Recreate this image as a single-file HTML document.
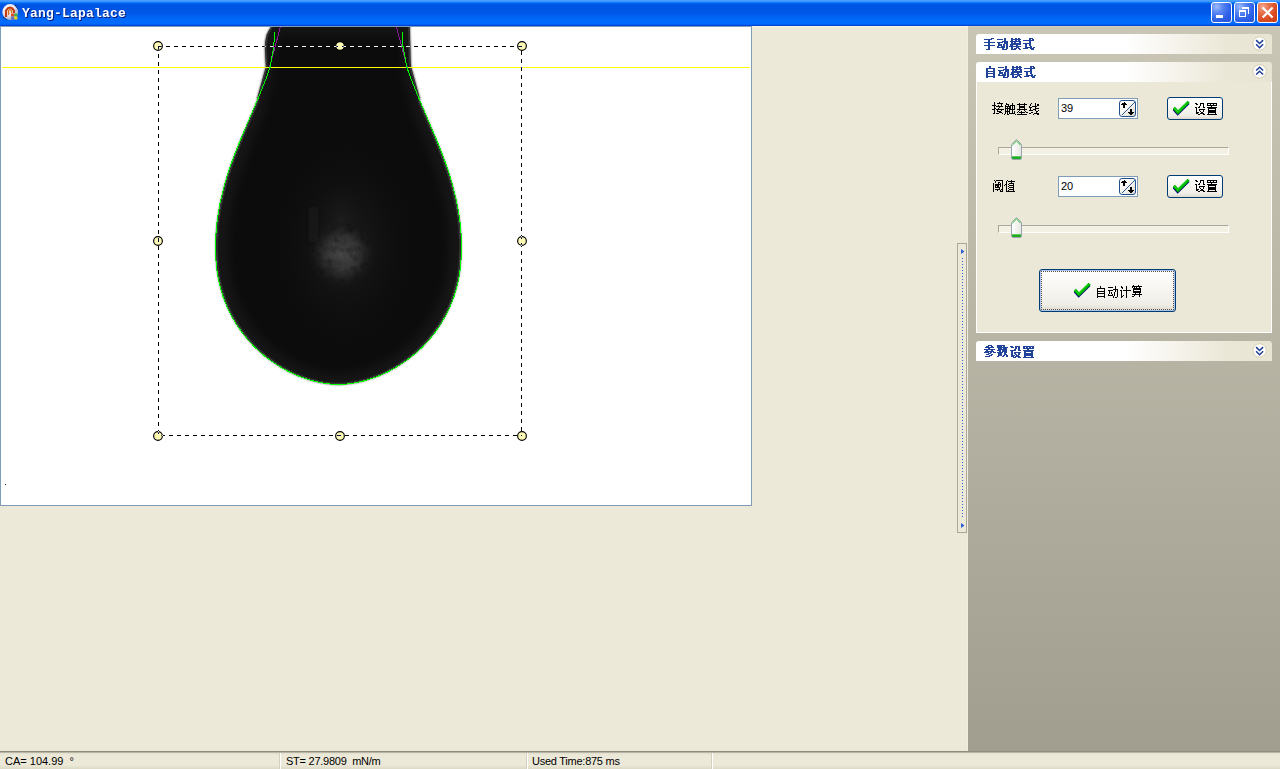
<!DOCTYPE html>
<html><head><meta charset="utf-8">
<style>
*{box-sizing:border-box;margin:0;padding:0}
html,body{width:1280px;height:769px;overflow:hidden;background:#ece9d8;font-family:"Liberation Sans",sans-serif;position:relative}
.abs{position:absolute}
#title{left:0;top:0;width:1280px;height:26px;
background:linear-gradient(180deg,#4a9cff 0px 1px,#3a93ff 1px 2px,#0b7eff 2px 3px,#0062ec 3px 4px,#0056e5 4px 5px,#0054e3 5px 6px,#0054e3 6px 7px,#0054e3 7px 8px,#0054e3 8px 9px,#0054e3 9px 10px,#0055e4 10px 11px,#0056e5 11px 12px,#0057e7 12px 13px,#0059e9 13px 14px,#005ceb 14px 15px,#005fee 15px 16px,#0062f1 16px 17px,#0065f4 17px 18px,#0067f7 18px 19px,#0069f9 19px 20px,#006afb 20px 21px,#006bfc 21px 22px,#006bfc 22px 23px,#0068fa 23px 24px,#005ff3 24px 25px,#0046d6 25px 26px)}
#ttext{left:22px;top:6px;font:bold 13px "Liberation Mono",monospace;color:#fff;text-shadow:1px 1px 0 #0a1a80;white-space:pre;line-height:15px;letter-spacing:0.2px}
.tb{top:2px;width:21px;height:21px;border:1px solid #fff;border-radius:3px}
.tbb{background:radial-gradient(circle at 25% 20%,#9dbcfb 0,#5684f1 30%,#2d60e8 65%,#2252d8 100%)}
.tbc{background:radial-gradient(circle at 25% 20%,#f3a88f 0,#e5714b 30%,#da4a1f 65%,#c73c15 100%)}
#view{left:0;top:26px;width:752px;height:480px;border:1px solid #7f9db9;background:#fff;overflow:hidden}
#rpanel{left:968px;top:26px;width:312px;height:725px;background:linear-gradient(180deg,#c9c6b6,#a19e8f)}
.hdr{left:976px;width:296px;height:20px;border-radius:3px 3px 0 0;background:linear-gradient(90deg,#fff 0%,#fff 50%,#ebe7d7 85%,#e9e5d4 100%)}
#body2{left:976px;top:82px;width:296px;height:251px;background:#ebe8d7;border:1px solid #fff;border-top:none}
.tbx{left:1058px;width:80px;height:21px;border:1px solid #7f9db9;background:#fff;font-size:11px;line-height:19px;padding-left:2px;color:#000}
.spin{left:1119px;width:17px;height:17px;border:1px solid #1f4f8f;border-radius:3px;background:linear-gradient(135deg,#fff 20%,#f1f0ea 60%,#dedbd0)}
.btn{border:1px solid #003c74;border-radius:3px;background:linear-gradient(180deg,#fff 0%,#f8f7f3 40%,#eeede6 85%,#dcd9cd 100%)}
.dflt{box-shadow:inset 0 0 0 1px #a9c3f0}
.focus{border:1px dotted #5a4a3a}
.track{left:998px;width:231px;height:8px;border-top:1px solid #aca899;border-left:1px solid #aca899;border-right:1px solid #fff;border-bottom:1px solid #fff;background:#f3f0e4}
#status{left:0;top:751px;width:1280px;height:18px;background:linear-gradient(180deg,#8e8c7e 0px,#8e8c7e 1px,#e3e0cf 2px,#ece9d8 4px,#ece9d8 14px,#dcd9c7 18px)}
.st{top:756px;font-size:11px;color:#000;white-space:pre;line-height:11px;letter-spacing:-0.25px}
.sep{top:753px;width:2px;height:16px;border-left:1px solid #d4d0bd;border-right:1px solid #fff}
</style></head><body>
<div id="title" class="abs"></div>
<svg class="abs" style="left:0;top:0" width="24" height="24">
<defs><radialGradient id="icg" cx="0.35" cy="0.3" r="0.7"><stop offset="0" stop-color="#ffffff"/><stop offset="0.6" stop-color="#e6e4ee"/><stop offset="1" stop-color="#a8b0c8"/></radialGradient></defs>
<circle cx="10.2" cy="12" r="7.9" fill="url(#icg)"/>
<path d="M6,17 V10.5 Q10,4.5 14,10.5 V13" fill="none" stroke="#c23a10" stroke-width="2.2"/>
<path d="M8.6,15 V10.6 Q10,8.6 11.5,10.6 V13" fill="none" stroke="#d8701c" stroke-width="1.4"/>
<rect x="11" y="13.5" width="3.2" height="3" fill="#e04a20"/><rect x="14.2" y="13.5" width="3.2" height="3" fill="#40b040"/>
<rect x="11" y="16.5" width="3.2" height="3" fill="#6a70c0"/><rect x="14.2" y="16.5" width="3.2" height="3" fill="#f0d020"/>
<path d="M15.3,5.2 L17.6,8.4 M3.2,17.3 L6.6,19.6" stroke="#000" stroke-width="0.9" stroke-dasharray="1 0.6"/>
</svg>
<div id="ttext" class="abs">Yang-Lapalace</div>
<div class="abs tb tbb" style="left:1211px"></div>
<div class="abs tb tbb" style="left:1234px"></div>
<div class="abs tb tbc" style="left:1257px"></div>
<svg class="abs" style="left:0;top:0" width="1280" height="26">
<rect x="1216" y="15" width="7" height="3" fill="#fff"/>
<path d="M1242,7 h7 v7 h-1 v-5 h-6z" fill="#fff"/>
<path d="M1239,10 h7 v7 h-7z M1240,12 v4 h5 v-4z" fill="#fff" fill-rule="evenodd"/>
<path d="M1262.6,7.6 L1272.6,17.6 M1272.6,7.6 L1262.6,17.6" stroke="#fff" stroke-width="2.1"/>
</svg>
<div id="view" class="abs"></div>
<svg class="abs" style="left:1px;top:27px" width="750" height="478" viewBox="1 27 750 478">
<defs>
<filter id="blur" x="-10%" y="-10%" width="120%" height="120%"><feGaussianBlur stdDeviation="1.1"/></filter>
<clipPath id="dclip"><path d="M270.5,20.0 271.0,27.0 268.5,31.0 266.6,35.0 265.2,42.0 265.0,50.0 265.5,60.0 265.9,67.0 265.3,69.0 264.7,71.0 264.2,73.0 263.6,75.0 263.1,77.0 262.5,79.0 262.0,81.0 261.4,83.0 260.9,85.0 260.3,87.0 259.8,89.0 259.2,91.0 258.7,93.0 258.1,95.0 257.6,97.0 257.0,99.0 257.4,101.0 256.5,103.0 255.7,105.0 254.8,107.0 254.0,109.0 253.1,111.0 252.3,113.0 251.4,115.0 250.5,117.0 249.7,119.0 248.8,121.0 248.0,123.0 247.1,125.0 246.3,127.0 245.4,129.0 244.6,131.0 243.7,133.0 242.9,135.0 242.0,137.0 241.2,139.0 240.4,141.0 239.6,143.0 238.8,145.0 238.0,147.0 237.2,149.0 236.4,151.0 235.6,153.0 234.8,155.0 234.1,157.0 233.3,159.0 232.6,161.0 231.9,163.0 231.2,165.0 230.5,167.0 229.8,169.0 229.1,171.0 228.5,173.0 227.8,175.0 227.2,177.0 226.6,179.0 226.0,181.0 225.4,183.0 224.9,185.0 224.3,187.0 223.8,189.0 223.3,191.0 222.8,193.0 222.3,195.0 221.8,197.0 221.4,199.0 220.9,201.0 220.5,203.0 220.1,205.0 219.7,207.0 219.4,209.0 219.0,211.0 218.7,213.0 218.4,215.0 218.1,217.0 217.8,219.0 217.5,221.0 217.3,223.0 217.1,225.0 216.9,227.0 216.7,229.0 216.5,231.0 216.4,233.0 216.3,235.0 216.2,237.0 216.1,239.0 216.0,241.0 216.0,243.0 216.0,245.0 216.0,247.0 216.0,249.0 216.1,253.6 216.2,257.2 216.4,260.7 216.7,264.3 217.0,267.9 217.5,271.4 218.0,274.9 218.6,278.4 219.3,281.9 220.2,285.4 221.1,288.8 222.1,292.2 223.1,295.6 224.3,299.0 225.6,302.3 226.9,305.6 228.4,308.8 229.9,312.0 231.5,315.2 233.2,318.3 235.0,321.3 236.8,324.4 238.8,327.3 240.8,330.2 242.9,333.1 245.1,335.8 247.3,338.6 249.6,341.2 252.0,343.8 254.4,346.4 256.9,348.8 259.5,351.2 262.1,353.5 264.8,355.8 267.6,358.0 270.3,360.1 273.2,362.1 276.1,364.0 279.0,365.9 281.9,367.7 284.9,369.3 287.9,371.0 291.0,372.5 294.1,373.9 297.1,375.3 300.2,376.5 303.4,377.7 306.5,378.8 309.6,379.8 312.7,380.7 315.8,381.5 318.9,382.2 322.0,382.8 325.0,383.3 328.0,383.7 330.9,384.1 333.8,384.3 336.5,384.5 338.9,384.5 340.5,384.5 343.2,384.3 346.1,384.1 349.0,383.7 352.0,383.3 355.0,382.8 358.1,382.2 361.2,381.5 364.3,380.7 367.4,379.8 370.5,378.8 373.6,377.7 376.8,376.5 379.9,375.3 382.9,373.9 386.0,372.5 389.1,371.0 392.1,369.3 395.1,367.7 398.0,365.9 400.9,364.0 403.8,362.1 406.7,360.1 409.4,358.0 412.2,355.8 414.9,353.5 417.5,351.2 420.1,348.8 422.6,346.4 425.0,343.8 427.4,341.2 429.7,338.6 431.9,335.8 434.1,333.1 436.2,330.2 438.2,327.3 440.2,324.4 442.0,321.3 443.8,318.3 445.5,315.2 447.1,312.0 448.6,308.8 450.1,305.6 451.4,302.3 452.7,299.0 453.9,295.6 454.9,292.2 455.9,288.8 456.8,285.4 457.7,281.9 458.4,278.4 459.0,274.9 459.5,271.4 460.0,267.9 460.3,264.3 460.6,260.7 460.8,257.2 460.9,253.6 461.0,249.0 461.0,247.0 461.0,245.0 461.0,243.0 461.0,241.0 460.9,239.0 460.8,237.0 460.7,235.0 460.6,233.0 460.5,231.0 460.3,229.0 460.1,227.0 459.9,225.0 459.7,223.0 459.5,221.0 459.2,219.0 458.9,217.0 458.6,215.0 458.3,213.0 458.0,211.0 457.6,209.0 457.3,207.0 456.9,205.0 456.5,203.0 456.1,201.0 455.6,199.0 455.2,197.0 454.7,195.0 454.2,193.0 453.7,191.0 453.2,189.0 452.7,187.0 452.1,185.0 451.6,183.0 451.0,181.0 450.4,179.0 449.8,177.0 449.2,175.0 448.5,173.0 447.9,171.0 447.2,169.0 446.5,167.0 445.8,165.0 445.1,163.0 444.4,161.0 443.7,159.0 442.9,157.0 442.2,155.0 441.4,153.0 440.6,151.0 439.8,149.0 439.0,147.0 438.2,145.0 437.4,143.0 436.6,141.0 435.8,139.0 435.0,137.0 434.1,135.0 433.3,133.0 432.4,131.0 431.6,129.0 430.7,127.0 429.9,125.0 429.0,123.0 428.2,121.0 427.3,119.0 426.5,117.0 425.6,115.0 424.7,113.0 423.9,111.0 423.0,109.0 422.2,107.0 421.3,105.0 420.5,103.0 419.6,101.0 420.0,99.0 419.4,97.0 418.9,95.0 418.3,93.0 417.8,91.0 417.2,89.0 416.7,87.0 416.1,85.0 415.6,83.0 415.0,81.0 414.5,79.0 413.9,77.0 413.4,75.0 412.8,73.0 412.3,71.0 411.7,69.0 411.1,67.0 410.6,60.0 410.3,46.0 410.0,35.0 409.8,27.0 409.8,20.0 Z"/></clipPath>
<filter id="blur3" x="-50%" y="-20%" width="200%" height="140%"><feGaussianBlur stdDeviation="1.6"/></filter>
<filter id="blur4" x="-20%" y="-20%" width="140%" height="140%"><feGaussianBlur stdDeviation="5"/></filter>
<filter id="blur2" x="-10%" y="-10%" width="120%" height="120%"><feGaussianBlur stdDeviation="0.7"/></filter>
<radialGradient id="spot" cx="342" cy="254" r="34" gradientUnits="userSpaceOnUse">
<stop offset="0" stop-color="#484848" stop-opacity="1"/><stop offset="0.5" stop-color="#383838" stop-opacity="0.85"/><stop offset="1" stop-color="#1a1a1a" stop-opacity="0"/></radialGradient>
<radialGradient id="glow" cx="0.5" cy="0.5" r="0.5">
<stop offset="0" stop-color="#1e1e1e" stop-opacity="1"/><stop offset="1" stop-color="#0e0e0e" stop-opacity="0"/></radialGradient>
<filter id="speck" x="0" y="0" width="100%" height="100%">
<feTurbulence type="fractalNoise" baseFrequency="0.15" numOctaves="2" seed="3" result="n"/>
<feColorMatrix in="n" type="matrix" values="0 0 0 0 0  0 0 0 0 0  0 0 0 0 0  0 0 0 -2.2 1.25" result="a"/>
<feComposite in="SourceGraphic" in2="a" operator="in"/>
</filter>
</defs>
<path d="M270.5,20.0 271.0,27.0 268.5,31.0 266.6,35.0 265.2,42.0 265.0,50.0 265.5,60.0 265.9,67.0 265.3,69.0 264.7,71.0 264.2,73.0 263.6,75.0 263.1,77.0 262.5,79.0 262.0,81.0 261.4,83.0 260.9,85.0 260.3,87.0 259.8,89.0 259.2,91.0 258.7,93.0 258.1,95.0 257.6,97.0 257.0,99.0 257.4,101.0 256.5,103.0 255.7,105.0 254.8,107.0 254.0,109.0 253.1,111.0 252.3,113.0 251.4,115.0 250.5,117.0 249.7,119.0 248.8,121.0 248.0,123.0 247.1,125.0 246.3,127.0 245.4,129.0 244.6,131.0 243.7,133.0 242.9,135.0 242.0,137.0 241.2,139.0 240.4,141.0 239.6,143.0 238.8,145.0 238.0,147.0 237.2,149.0 236.4,151.0 235.6,153.0 234.8,155.0 234.1,157.0 233.3,159.0 232.6,161.0 231.9,163.0 231.2,165.0 230.5,167.0 229.8,169.0 229.1,171.0 228.5,173.0 227.8,175.0 227.2,177.0 226.6,179.0 226.0,181.0 225.4,183.0 224.9,185.0 224.3,187.0 223.8,189.0 223.3,191.0 222.8,193.0 222.3,195.0 221.8,197.0 221.4,199.0 220.9,201.0 220.5,203.0 220.1,205.0 219.7,207.0 219.4,209.0 219.0,211.0 218.7,213.0 218.4,215.0 218.1,217.0 217.8,219.0 217.5,221.0 217.3,223.0 217.1,225.0 216.9,227.0 216.7,229.0 216.5,231.0 216.4,233.0 216.3,235.0 216.2,237.0 216.1,239.0 216.0,241.0 216.0,243.0 216.0,245.0 216.0,247.0 216.0,249.0 216.1,253.6 216.2,257.2 216.4,260.7 216.7,264.3 217.0,267.9 217.5,271.4 218.0,274.9 218.6,278.4 219.3,281.9 220.2,285.4 221.1,288.8 222.1,292.2 223.1,295.6 224.3,299.0 225.6,302.3 226.9,305.6 228.4,308.8 229.9,312.0 231.5,315.2 233.2,318.3 235.0,321.3 236.8,324.4 238.8,327.3 240.8,330.2 242.9,333.1 245.1,335.8 247.3,338.6 249.6,341.2 252.0,343.8 254.4,346.4 256.9,348.8 259.5,351.2 262.1,353.5 264.8,355.8 267.6,358.0 270.3,360.1 273.2,362.1 276.1,364.0 279.0,365.9 281.9,367.7 284.9,369.3 287.9,371.0 291.0,372.5 294.1,373.9 297.1,375.3 300.2,376.5 303.4,377.7 306.5,378.8 309.6,379.8 312.7,380.7 315.8,381.5 318.9,382.2 322.0,382.8 325.0,383.3 328.0,383.7 330.9,384.1 333.8,384.3 336.5,384.5 338.9,384.5 340.5,384.5 343.2,384.3 346.1,384.1 349.0,383.7 352.0,383.3 355.0,382.8 358.1,382.2 361.2,381.5 364.3,380.7 367.4,379.8 370.5,378.8 373.6,377.7 376.8,376.5 379.9,375.3 382.9,373.9 386.0,372.5 389.1,371.0 392.1,369.3 395.1,367.7 398.0,365.9 400.9,364.0 403.8,362.1 406.7,360.1 409.4,358.0 412.2,355.8 414.9,353.5 417.5,351.2 420.1,348.8 422.6,346.4 425.0,343.8 427.4,341.2 429.7,338.6 431.9,335.8 434.1,333.1 436.2,330.2 438.2,327.3 440.2,324.4 442.0,321.3 443.8,318.3 445.5,315.2 447.1,312.0 448.6,308.8 450.1,305.6 451.4,302.3 452.7,299.0 453.9,295.6 454.9,292.2 455.9,288.8 456.8,285.4 457.7,281.9 458.4,278.4 459.0,274.9 459.5,271.4 460.0,267.9 460.3,264.3 460.6,260.7 460.8,257.2 460.9,253.6 461.0,249.0 461.0,247.0 461.0,245.0 461.0,243.0 461.0,241.0 460.9,239.0 460.8,237.0 460.7,235.0 460.6,233.0 460.5,231.0 460.3,229.0 460.1,227.0 459.9,225.0 459.7,223.0 459.5,221.0 459.2,219.0 458.9,217.0 458.6,215.0 458.3,213.0 458.0,211.0 457.6,209.0 457.3,207.0 456.9,205.0 456.5,203.0 456.1,201.0 455.6,199.0 455.2,197.0 454.7,195.0 454.2,193.0 453.7,191.0 453.2,189.0 452.7,187.0 452.1,185.0 451.6,183.0 451.0,181.0 450.4,179.0 449.8,177.0 449.2,175.0 448.5,173.0 447.9,171.0 447.2,169.0 446.5,167.0 445.8,165.0 445.1,163.0 444.4,161.0 443.7,159.0 442.9,157.0 442.2,155.0 441.4,153.0 440.6,151.0 439.8,149.0 439.0,147.0 438.2,145.0 437.4,143.0 436.6,141.0 435.8,139.0 435.0,137.0 434.1,135.0 433.3,133.0 432.4,131.0 431.6,129.0 430.7,127.0 429.9,125.0 429.0,123.0 428.2,121.0 427.3,119.0 426.5,117.0 425.6,115.0 424.7,113.0 423.9,111.0 423.0,109.0 422.2,107.0 421.3,105.0 420.5,103.0 419.6,101.0 420.0,99.0 419.4,97.0 418.9,95.0 418.3,93.0 417.8,91.0 417.2,89.0 416.7,87.0 416.1,85.0 415.6,83.0 415.0,81.0 414.5,79.0 413.9,77.0 413.4,75.0 412.8,73.0 412.3,71.0 411.7,69.0 411.1,67.0 410.6,60.0 410.3,46.0 410.0,35.0 409.8,27.0 409.8,20.0 Z" fill="#171717" filter="url(#blur)"/>
<g clip-path="url(#dclip)"><g opacity="0.45"><path d="M277.3,35.0 277.8,41.6 275.5,45.3 273.8,49.0 272.5,55.5 272.4,62.9 272.8,72.2 273.2,78.8 272.6,80.6 272.1,82.5 271.6,84.3 271.1,86.2 270.6,88.1 270.1,89.9 269.6,91.8 269.1,93.6 268.7,95.5 268.1,97.4 267.7,99.2 267.1,101.1 266.7,102.9 266.1,104.8 265.7,106.7 265.1,108.5 265.5,110.4 264.7,112.2 264.0,114.1 263.2,116.0 262.4,117.8 261.6,119.7 260.9,121.5 260.1,123.4 259.3,125.3 258.6,127.1 257.8,129.0 257.1,130.8 256.2,132.7 255.5,134.6 254.7,136.4 254.0,138.3 253.2,140.1 252.5,142.0 251.6,143.9 250.9,145.7 250.2,147.6 249.5,149.4 248.8,151.3 248.1,153.2 247.3,155.0 246.6,156.9 245.9,158.7 245.2,160.6 244.5,162.5 243.8,164.3 243.2,166.2 242.6,168.0 241.9,169.9 241.3,171.8 240.7,173.6 240.0,175.5 239.5,177.3 238.9,179.2 238.3,181.1 237.8,182.9 237.2,184.8 236.7,186.6 236.3,188.5 235.7,190.4 235.3,192.2 234.8,194.1 234.4,195.9 233.9,197.8 233.5,199.7 233.1,201.5 232.7,203.4 232.3,205.2 231.9,207.1 231.6,209.0 231.3,210.8 230.9,212.7 230.7,214.5 230.4,216.4 230.1,218.3 229.9,220.1 229.6,222.0 229.4,223.8 229.2,225.7 229.1,227.6 228.9,229.4 228.7,231.3 228.6,233.1 228.5,235.0 228.4,236.9 228.3,238.7 228.2,240.6 228.2,242.4 228.2,244.3 228.2,246.2 228.2,248.0 228.3,252.3 228.4,255.6 228.6,258.9 228.9,262.2 229.1,265.6 229.6,268.9 230.1,272.1 230.6,275.4 231.2,278.6 232.0,281.9 232.8,285.0 233.7,288.2 234.6,291.4 235.7,294.5 236.9,297.6 238.1,300.7 239.4,303.6 240.8,306.6 242.2,309.6 243.7,312.5 245.3,315.3 247.0,318.1 248.8,320.8 250.6,323.5 252.5,326.2 254.4,328.7 256.4,331.3 258.5,333.8 260.6,336.2 262.8,338.6 265.1,340.8 267.4,343.1 269.7,345.2 272.2,347.3 274.7,349.4 277.1,351.3 279.7,353.2 282.3,355.0 284.9,356.7 287.6,358.4 290.3,359.9 293.0,361.5 295.8,362.9 298.5,364.2 301.2,365.5 304.0,366.6 306.9,367.7 309.7,368.7 312.5,369.7 315.3,370.5 318.1,371.2 320.9,371.9 323.6,372.5 326.4,372.9 329.1,373.3 331.7,373.7 334.3,373.8 336.7,374.0 338.9,374.0 340.3,374.0 342.7,373.8 345.3,373.7 347.9,373.3 350.6,372.9 353.4,372.5 356.1,371.9 358.9,371.2 361.7,370.5 364.5,369.7 367.3,368.7 370.1,367.7 373.0,366.6 375.8,365.5 378.5,364.2 381.2,362.9 384.0,361.5 386.7,359.9 389.4,358.4 392.1,356.7 394.7,355.0 397.3,353.2 399.9,351.3 402.3,349.4 404.8,347.3 407.3,345.2 409.6,343.1 411.9,340.8 414.2,338.6 416.4,336.2 418.5,333.8 420.6,331.3 422.6,328.7 424.5,326.2 426.4,323.5 428.2,320.8 430.0,318.1 431.6,315.3 433.3,312.5 434.8,309.6 436.2,306.6 437.6,303.6 438.9,300.7 440.1,297.6 441.3,294.5 442.4,291.4 443.3,288.2 444.2,285.0 445.0,281.9 445.8,278.6 446.4,275.4 446.9,272.1 447.4,268.9 447.9,265.6 448.1,262.2 448.4,258.9 448.6,255.6 448.7,252.3 448.8,248.0 448.8,246.2 448.8,244.3 448.8,242.4 448.8,240.6 448.7,238.7 448.6,236.9 448.5,235.0 448.4,233.1 448.3,231.3 448.1,229.4 447.9,227.6 447.8,225.7 447.6,223.8 447.4,222.0 447.1,220.1 446.9,218.3 446.6,216.4 446.3,214.5 446.1,212.7 445.7,210.8 445.4,209.0 445.1,207.1 444.7,205.2 444.3,203.4 443.9,201.5 443.5,199.7 443.1,197.8 442.6,195.9 442.2,194.1 441.7,192.2 441.3,190.4 440.7,188.5 440.3,186.6 439.8,184.8 439.2,182.9 438.7,181.1 438.1,179.2 437.5,177.3 437.0,175.5 436.3,173.6 435.7,171.8 435.1,169.9 434.4,168.0 433.8,166.2 433.2,164.3 432.5,162.5 431.8,160.6 431.1,158.7 430.4,156.9 429.7,155.0 428.9,153.2 428.2,151.3 427.5,149.4 426.8,147.6 426.1,145.7 425.4,143.9 424.5,142.0 423.8,140.1 423.0,138.3 422.3,136.4 421.5,134.6 420.8,132.7 419.9,130.8 419.2,129.0 418.4,127.1 417.7,125.3 416.9,123.4 416.1,121.5 415.4,119.7 414.6,117.8 413.8,116.0 413.0,114.1 412.3,112.2 411.5,110.4 411.9,108.5 411.3,106.7 410.9,104.8 410.3,102.9 409.9,101.1 409.3,99.2 408.9,97.4 408.3,95.5 407.9,93.6 407.4,91.8 406.9,89.9 406.4,88.1 405.9,86.2 405.4,84.3 404.9,82.5 404.4,80.6 403.8,78.8 403.4,72.2 403.1,59.2 402.9,49.0 402.7,41.6 402.7,35.0 Z" fill="#000" filter="url(#blur4)"/></g><path d="M270.5,20.0 271.0,27.0 268.5,31.0 266.6,35.0 265.2,42.0 265.0,50.0 265.5,60.0 265.9,67.0 265.3,69.0 264.7,71.0 264.2,73.0 263.6,75.0 263.1,77.0 262.5,79.0 262.0,81.0 261.4,83.0 260.9,85.0 260.3,87.0 259.8,89.0 259.2,91.0 258.7,93.0 258.1,95.0 257.6,97.0 257.0,99.0 257.4,101.0 256.5,103.0 255.7,105.0 254.8,107.0 254.0,109.0 253.1,111.0 252.3,113.0 251.4,115.0 250.5,117.0 249.7,119.0 248.8,121.0 248.0,123.0 247.1,125.0 246.3,127.0 245.4,129.0 244.6,131.0 243.7,133.0 242.9,135.0 242.0,137.0 241.2,139.0 240.4,141.0 239.6,143.0 238.8,145.0 238.0,147.0 237.2,149.0 236.4,151.0 235.6,153.0 234.8,155.0 234.1,157.0 233.3,159.0 232.6,161.0 231.9,163.0 231.2,165.0 230.5,167.0 229.8,169.0 229.1,171.0 228.5,173.0 227.8,175.0 227.2,177.0 226.6,179.0 226.0,181.0 225.4,183.0 224.9,185.0 224.3,187.0 223.8,189.0 223.3,191.0 222.8,193.0 222.3,195.0 221.8,197.0 221.4,199.0 220.9,201.0 220.5,203.0 220.1,205.0 219.7,207.0 219.4,209.0 219.0,211.0 218.7,213.0 218.4,215.0 218.1,217.0 217.8,219.0 217.5,221.0 217.3,223.0 217.1,225.0 216.9,227.0 216.7,229.0 216.5,231.0 216.4,233.0 216.3,235.0 216.2,237.0 216.1,239.0 216.0,241.0 216.0,243.0 216.0,245.0 216.0,247.0 216.0,249.0 216.1,253.6 216.2,257.2 216.4,260.7 216.7,264.3 217.0,267.9 217.5,271.4 218.0,274.9 218.6,278.4 219.3,281.9 220.2,285.4 221.1,288.8 222.1,292.2 223.1,295.6 224.3,299.0 225.6,302.3 226.9,305.6 228.4,308.8 229.9,312.0 231.5,315.2 233.2,318.3 235.0,321.3 236.8,324.4 238.8,327.3 240.8,330.2 242.9,333.1 245.1,335.8 247.3,338.6 249.6,341.2 252.0,343.8 254.4,346.4 256.9,348.8 259.5,351.2 262.1,353.5 264.8,355.8 267.6,358.0 270.3,360.1 273.2,362.1 276.1,364.0 279.0,365.9 281.9,367.7 284.9,369.3 287.9,371.0 291.0,372.5 294.1,373.9 297.1,375.3 300.2,376.5 303.4,377.7 306.5,378.8 309.6,379.8 312.7,380.7 315.8,381.5 318.9,382.2 322.0,382.8 325.0,383.3 328.0,383.7 330.9,384.1 333.8,384.3 336.5,384.5 338.9,384.5 340.5,384.5 343.2,384.3 346.1,384.1 349.0,383.7 352.0,383.3 355.0,382.8 358.1,382.2 361.2,381.5 364.3,380.7 367.4,379.8 370.5,378.8 373.6,377.7 376.8,376.5 379.9,375.3 382.9,373.9 386.0,372.5 389.1,371.0 392.1,369.3 395.1,367.7 398.0,365.9 400.9,364.0 403.8,362.1 406.7,360.1 409.4,358.0 412.2,355.8 414.9,353.5 417.5,351.2 420.1,348.8 422.6,346.4 425.0,343.8 427.4,341.2 429.7,338.6 431.9,335.8 434.1,333.1 436.2,330.2 438.2,327.3 440.2,324.4 442.0,321.3 443.8,318.3 445.5,315.2 447.1,312.0 448.6,308.8 450.1,305.6 451.4,302.3 452.7,299.0 453.9,295.6 454.9,292.2 455.9,288.8 456.8,285.4 457.7,281.9 458.4,278.4 459.0,274.9 459.5,271.4 460.0,267.9 460.3,264.3 460.6,260.7 460.8,257.2 460.9,253.6 461.0,249.0 461.0,247.0 461.0,245.0 461.0,243.0 461.0,241.0 460.9,239.0 460.8,237.0 460.7,235.0 460.6,233.0 460.5,231.0 460.3,229.0 460.1,227.0 459.9,225.0 459.7,223.0 459.5,221.0 459.2,219.0 458.9,217.0 458.6,215.0 458.3,213.0 458.0,211.0 457.6,209.0 457.3,207.0 456.9,205.0 456.5,203.0 456.1,201.0 455.6,199.0 455.2,197.0 454.7,195.0 454.2,193.0 453.7,191.0 453.2,189.0 452.7,187.0 452.1,185.0 451.6,183.0 451.0,181.0 450.4,179.0 449.8,177.0 449.2,175.0 448.5,173.0 447.9,171.0 447.2,169.0 446.5,167.0 445.8,165.0 445.1,163.0 444.4,161.0 443.7,159.0 442.9,157.0 442.2,155.0 441.4,153.0 440.6,151.0 439.8,149.0 439.0,147.0 438.2,145.0 437.4,143.0 436.6,141.0 435.8,139.0 435.0,137.0 434.1,135.0 433.3,133.0 432.4,131.0 431.6,129.0 430.7,127.0 429.9,125.0 429.0,123.0 428.2,121.0 427.3,119.0 426.5,117.0 425.6,115.0 424.7,113.0 423.9,111.0 423.0,109.0 422.2,107.0 421.3,105.0 420.5,103.0 419.6,101.0 420.0,99.0 419.4,97.0 418.9,95.0 418.3,93.0 417.8,91.0 417.2,89.0 416.7,87.0 416.1,85.0 415.6,83.0 415.0,81.0 414.5,79.0 413.9,77.0 413.4,75.0 412.8,73.0 412.3,71.0 411.7,69.0 411.1,67.0 410.6,60.0 410.3,46.0 410.0,35.0 409.8,27.0 409.8,20.0 Z" fill="none" stroke="#2a2a2a" stroke-width="2" filter="url(#blur2)"/></g>
<ellipse cx="345" cy="245" rx="75" ry="110" fill="url(#glow)"/>
<ellipse cx="341" cy="222" rx="28" ry="48" fill="url(#glow)" opacity="0.8"/>
<rect x="309" y="207" width="9" height="35" fill="#1f1f1f" opacity="0.55" filter="url(#blur3)"/>
<circle cx="342" cy="254" r="34" fill="url(#spot)"/>
<circle cx="342" cy="253" r="30" fill="#000" opacity="0.35" filter="url(#speck)"/>
<line x1="2" y1="67.5" x2="750" y2="67.5" stroke="#ffff00" stroke-width="1"/>
<path d="M280.4,27 L269.6,67" stroke="#8a1a9a" stroke-width="1" fill="none" shape-rendering="crispEdges"/>
<path d="M396.4,27 L407.2,67" stroke="#8a1a9a" stroke-width="1" fill="none" shape-rendering="crispEdges"/>
<path d="M274.6,32 L273.8,46 L270.2,67.0 269.5,69.0 268.8,71.0 268.1,73.0 267.4,75.0 266.6,77.0 265.9,79.0 265.1,81.0 264.3,83.0 263.5,85.0 262.7,87.0 261.9,89.0 261.1,91.0 260.3,93.0 259.5,95.0 258.6,97.0 257.8,99.0 257.0,101.0 256.1,103.0 255.3,105.0 254.4,107.0 253.6,109.0 252.7,111.0 251.9,113.0 251.0,115.0 250.1,117.0 249.3,119.0 248.4,121.0 247.6,123.0 246.7,125.0 245.9,127.0 245.0,129.0 244.2,131.0 243.3,133.0 242.5,135.0 241.6,137.0 240.8,139.0 240.0,141.0 239.2,143.0 238.4,145.0 237.6,147.0 236.8,149.0 236.0,151.0 235.2,153.0 234.4,155.0 233.7,157.0 232.9,159.0 232.2,161.0 231.5,163.0 230.8,165.0 230.1,167.0 229.4,169.0 228.7,171.0 228.1,173.0 227.4,175.0 226.8,177.0 226.2,179.0 225.6,181.0 225.0,183.0 224.5,185.0 223.9,187.0 223.4,189.0 222.9,191.0 222.4,193.0 221.9,195.0 221.4,197.0 221.0,199.0 220.5,201.0 220.1,203.0 219.7,205.0 219.3,207.0 219.0,209.0 218.6,211.0 218.3,213.0 218.0,215.0 217.7,217.0 217.4,219.0 217.1,221.0 216.9,223.0 216.7,225.0 216.5,227.0 216.3,229.0 216.1,231.0 216.0,233.0 215.9,235.0 215.8,237.0 215.7,239.0 215.6,241.0 215.6,243.0 215.6,245.0 215.6,247.0 215.6,249.0 215.7,253.6 215.8,257.2 216.0,260.7 216.3,264.3 216.6,267.9 217.1,271.4 217.6,274.9 218.2,278.4 218.9,281.9 219.8,285.4 220.7,288.8 221.7,292.2 222.7,295.6 223.9,299.0 225.2,302.3 226.5,305.6 228.0,308.8 229.5,312.0 231.1,315.2 232.8,318.3 234.6,321.3 236.4,324.4 238.4,327.3 240.4,330.2 242.5,333.1 244.7,335.8 246.9,338.6 249.2,341.2 251.6,343.8 254.0,346.4 256.5,348.8 259.1,351.2 261.7,353.5 264.4,355.8 267.2,358.0 269.9,360.1 272.8,362.1 275.7,364.0 278.6,365.9 281.5,367.7 284.5,369.3 287.5,371.0 290.6,372.5 293.7,373.9 296.7,375.3 299.8,376.5 303.0,377.7 306.1,378.8 309.2,379.8 312.3,380.7 315.4,381.5 318.5,382.2 321.6,382.8 324.6,383.3 327.6,383.7 330.5,384.1 333.4,384.3 336.1,384.5 338.5,384.5 340.9,384.5 343.6,384.3 346.5,384.1 349.4,383.7 352.4,383.3 355.4,382.8 358.5,382.2 361.6,381.5 364.7,380.7 367.8,379.8 370.9,378.8 374.0,377.7 377.2,376.5 380.3,375.3 383.3,373.9 386.4,372.5 389.5,371.0 392.5,369.3 395.5,367.7 398.4,365.9 401.3,364.0 404.2,362.1 407.1,360.1 409.8,358.0 412.6,355.8 415.3,353.5 417.9,351.2 420.5,348.8 423.0,346.4 425.4,343.8 427.8,341.2 430.1,338.6 432.3,335.8 434.5,333.1 436.6,330.2 438.6,327.3 440.6,324.4 442.4,321.3 444.2,318.3 445.9,315.2 447.5,312.0 449.0,308.8 450.5,305.6 451.8,302.3 453.1,299.0 454.3,295.6 455.3,292.2 456.3,288.8 457.2,285.4 458.1,281.9 458.8,278.4 459.4,274.9 459.9,271.4 460.4,267.9 460.7,264.3 461.0,260.7 461.2,257.2 461.3,253.6 461.4,249.0 461.4,247.0 461.4,245.0 461.4,243.0 461.4,241.0 461.3,239.0 461.2,237.0 461.1,235.0 461.0,233.0 460.9,231.0 460.7,229.0 460.5,227.0 460.3,225.0 460.1,223.0 459.9,221.0 459.6,219.0 459.3,217.0 459.0,215.0 458.7,213.0 458.4,211.0 458.0,209.0 457.7,207.0 457.3,205.0 456.9,203.0 456.5,201.0 456.0,199.0 455.6,197.0 455.1,195.0 454.6,193.0 454.1,191.0 453.6,189.0 453.1,187.0 452.5,185.0 452.0,183.0 451.4,181.0 450.8,179.0 450.2,177.0 449.6,175.0 448.9,173.0 448.3,171.0 447.6,169.0 446.9,167.0 446.2,165.0 445.5,163.0 444.8,161.0 444.1,159.0 443.3,157.0 442.6,155.0 441.8,153.0 441.0,151.0 440.2,149.0 439.4,147.0 438.6,145.0 437.8,143.0 437.0,141.0 436.2,139.0 435.4,137.0 434.5,135.0 433.7,133.0 432.8,131.0 432.0,129.0 431.1,127.0 430.3,125.0 429.4,123.0 428.6,121.0 427.7,119.0 426.9,117.0 426.0,115.0 425.1,113.0 424.3,111.0 423.4,109.0 422.6,107.0 421.7,105.0 420.9,103.0 420.0,101.0 419.2,99.0 418.4,97.0 417.5,95.0 416.7,93.0 415.9,91.0 415.1,89.0 414.3,87.0 413.5,85.0 412.7,83.0 411.9,81.0 411.1,79.0 410.4,77.0 409.6,75.0 408.9,73.0 408.2,71.0 407.5,69.0 406.8,67.0 L402.9,46 L402.5,32" stroke="#00ff00" stroke-width="1" fill="none" shape-rendering="crispEdges"/>
<circle cx="158" cy="46" r="4.35" fill="#fcf9b4" stroke="#000" stroke-width="1.15"/><circle cx="340" cy="46" r="4.35" fill="#fcf9b4" stroke="#000" stroke-width="1.15"/><circle cx="522" cy="46" r="4.35" fill="#fcf9b4" stroke="#000" stroke-width="1.15"/><circle cx="158" cy="241" r="4.35" fill="#fcf9b4" stroke="#000" stroke-width="1.15"/><circle cx="522" cy="241" r="4.35" fill="#fcf9b4" stroke="#000" stroke-width="1.15"/><circle cx="158" cy="436" r="4.35" fill="#fcf9b4" stroke="#000" stroke-width="1.15"/><circle cx="340" cy="436" r="4.35" fill="#fcf9b4" stroke="#000" stroke-width="1.15"/><circle cx="522" cy="436" r="4.35" fill="#fcf9b4" stroke="#000" stroke-width="1.15"/>
<g style="mix-blend-mode:difference" stroke="#fff" stroke-width="1" stroke-dasharray="4 4" fill="none">
<path d="M158,46.5 H522"/><path d="M158,435.5 H522" stroke-dashoffset="5"/><path d="M158.5,46 V436"/><path d="M521.5,46 V436" stroke-dashoffset="3"/>
</g>
<rect x="5" y="484" width="1" height="1" fill="#222"/>
</svg>
<div class="abs" style="left:967px;top:26px;width:1px;height:725px;background:#f0ede0"></div>
<div id="rpanel" class="abs"></div>
<div class="abs" style="left:957px;top:243px;width:10px;height:290px;border:1px solid #aca899;background:#ece9d8"></div>
<svg class="abs" style="left:957px;top:243px" width="10" height="290">
<path d="M4,6 L7.5,8.5 L4,11z" fill="#2d5ed6"/>
<path d="M4,280 L7.5,282.5 L4,285z" fill="#2d5ed6"/>
<path d="M5.5,15 V274" stroke="#2d5ed6" stroke-width="1" stroke-dasharray="1 2"/>
</svg>
<div class="abs" style="left:752px;top:26px;width:216px;height:1px;background:#f9f4e0"></div>
<div class="abs" style="left:968px;top:26px;width:312px;height:1px;background:#d6d0ba"></div>
<div class="abs hdr" style="top:34px"></div><svg class="abs" style="left:0;top:0" width="1280" height="769"><circle cx="1259.6" cy="43.4" r="6.7" fill="#fff" stroke="#d8d0b0" stroke-width="1"/><path d="M1256.1,40.1 L1259.6,43.5 L1263.1,40.1" fill="none" stroke="#1e3f94" stroke-width="1.55"/><path d="M1256.1,44.3 L1259.6,47.699999999999996 L1263.1,44.3" fill="none" stroke="#1e3f94" stroke-width="1.55"/></svg>
<div class="abs hdr" style="top:62px"></div><svg class="abs" style="left:0;top:0" width="1280" height="769"><circle cx="1259.6" cy="71.4" r="6.7" fill="#fff" stroke="#d8d0b0" stroke-width="1"/><path d="M1256.1,70.5 L1259.6,67.2 L1263.1,70.5" fill="none" stroke="#1e3f94" stroke-width="1.55"/><path d="M1256.1,74.5 L1259.6,71.2 L1263.1,74.5" fill="none" stroke="#1e3f94" stroke-width="1.55"/></svg>
<div id="body2" class="abs"></div>
<div class="abs hdr" style="top:341px"></div><svg class="abs" style="left:0;top:0" width="1280" height="769"><circle cx="1259.6" cy="350.4" r="6.7" fill="#fff" stroke="#d8d0b0" stroke-width="1"/><path d="M1256.1,347.09999999999997 L1259.6,350.49999999999994 L1263.1,347.09999999999997" fill="none" stroke="#1e3f94" stroke-width="1.55"/><path d="M1256.1,351.29999999999995 L1259.6,354.69999999999993 L1263.1,351.29999999999995" fill="none" stroke="#1e3f94" stroke-width="1.55"/></svg>
<div class="abs tbx" style="top:98px">39</div><div class="abs spin" style="top:100px"></div><svg class="abs" style="left:1119px;top:100px" width="17" height="17" shape-rendering="crispEdges"><path d="M2,15 h1 v-1 h1 v-1 h1 v-1 h1 v-1 h1 v-1 h1 v-1 h1 v-1 h1 v-1 h1 v-1 h1 v-1 h1 v-1 h1 v-1 h1 v-1 h1 v1 h-1 v1 h-1 v1 h-1 v1 h-1 v1 h-1 v1 h-1 v1 h-1 v1 h-1 v1 h-1 v1 h-1 v1 h-1 v1 h-1 v1 h-1z" fill="#2b5a9a"/><path d="M5,2 h1 v1 h1 v1 h1 v1 h-2 v3 h-2 v-3 h-2 v-1 h1 v-1 h1z" fill="#000"/><path d="M11,9 h2 v3 h2 v1 h-1 v1 h-1 v1 h-2 v-1 h-1 v-1 h-1 v-1 h2z" fill="#000"/></svg>
<div class="abs btn" style="left:1167px;top:97px;width:56px;height:23px"></div>
<svg class="abs" style="left:1173px;top:101px" width="17" height="16" viewBox="0 0 17 16"><path d="M1.8,7.8 L4.9,11.3 L14.6,1.8" fill="none" stroke="#00007a" stroke-width="3" stroke-linecap="square" transform="translate(-0.2,1.2)"/><path d="M1.8,7.8 L4.9,11.3 L14.6,1.8" fill="none" stroke="#00b400" stroke-width="3" stroke-linecap="square"/><path d="M1.2,7.2 L4.9,10.6 L14,1.2" fill="none" stroke="#22ee22" stroke-width="1" opacity="0.8"/></svg>
<div class="abs track" style="top:147px"></div><svg class="abs" style="left:1011px;top:139px" width="11" height="21" viewBox="0 0 11 21"><defs><linearGradient id="tg147" x1="0" x2="1"><stop offset="0" stop-color="#fff"/><stop offset="1" stop-color="#e6e6e0"/></linearGradient></defs><path d="M0.5,5.5 L5.5,0.5 L10.5,5.5 L10.5,19 Q10.5,20.5 9,20.5 L2,20.5 Q0.5,20.5 0.5,19 Z" fill="url(#tg147)" stroke="#9aa4b0" stroke-width="1"/><path d="M1.3,6.2 L5.5,2 L9.7,6.2" fill="none" stroke="#2fba2f" stroke-width="1"/><path d="M1,17.2 H10 V19 Q10,20 9,20 H2 Q1,20 1,19 Z" fill="#22aa22"/><rect x="1" y="17" width="9" height="0.8" fill="#5cd05c"/></svg>
<div class="abs tbx" style="top:176px">20</div><div class="abs spin" style="top:178px"></div><svg class="abs" style="left:1119px;top:178px" width="17" height="17" shape-rendering="crispEdges"><path d="M2,15 h1 v-1 h1 v-1 h1 v-1 h1 v-1 h1 v-1 h1 v-1 h1 v-1 h1 v-1 h1 v-1 h1 v-1 h1 v-1 h1 v-1 h1 v-1 h1 v1 h-1 v1 h-1 v1 h-1 v1 h-1 v1 h-1 v1 h-1 v1 h-1 v1 h-1 v1 h-1 v1 h-1 v1 h-1 v1 h-1 v1 h-1z" fill="#2b5a9a"/><path d="M5,2 h1 v1 h1 v1 h1 v1 h-2 v3 h-2 v-3 h-2 v-1 h1 v-1 h1z" fill="#000"/><path d="M11,9 h2 v3 h2 v1 h-1 v1 h-1 v1 h-2 v-1 h-1 v-1 h-1 v-1 h2z" fill="#000"/></svg>
<div class="abs btn" style="left:1167px;top:175px;width:56px;height:23px"></div>
<svg class="abs" style="left:1173px;top:179px" width="17" height="16" viewBox="0 0 17 16"><path d="M1.8,7.8 L4.9,11.3 L14.6,1.8" fill="none" stroke="#00007a" stroke-width="3" stroke-linecap="square" transform="translate(-0.2,1.2)"/><path d="M1.8,7.8 L4.9,11.3 L14.6,1.8" fill="none" stroke="#00b400" stroke-width="3" stroke-linecap="square"/><path d="M1.2,7.2 L4.9,10.6 L14,1.2" fill="none" stroke="#22ee22" stroke-width="1" opacity="0.8"/></svg>
<div class="abs track" style="top:225px"></div><svg class="abs" style="left:1011px;top:217px" width="11" height="21" viewBox="0 0 11 21"><defs><linearGradient id="tg225" x1="0" x2="1"><stop offset="0" stop-color="#fff"/><stop offset="1" stop-color="#e6e6e0"/></linearGradient></defs><path d="M0.5,5.5 L5.5,0.5 L10.5,5.5 L10.5,19 Q10.5,20.5 9,20.5 L2,20.5 Q0.5,20.5 0.5,19 Z" fill="url(#tg225)" stroke="#9aa4b0" stroke-width="1"/><path d="M1.3,6.2 L5.5,2 L9.7,6.2" fill="none" stroke="#2fba2f" stroke-width="1"/><path d="M1,17.2 H10 V19 Q10,20 9,20 H2 Q1,20 1,19 Z" fill="#22aa22"/><rect x="1" y="17" width="9" height="0.8" fill="#5cd05c"/></svg>
<div class="abs btn dflt" style="left:1039px;top:269px;width:137px;height:43px"></div>
<div class="abs focus" style="left:1041px;top:271px;width:133px;height:39px"></div>
<svg class="abs" style="left:1074px;top:283px" width="17" height="16" viewBox="0 0 17 16"><path d="M1.8,7.8 L4.9,11.3 L14.6,1.8" fill="none" stroke="#00007a" stroke-width="3" stroke-linecap="square" transform="translate(-0.2,1.2)"/><path d="M1.8,7.8 L4.9,11.3 L14.6,1.8" fill="none" stroke="#00b400" stroke-width="3" stroke-linecap="square"/><path d="M1.2,7.2 L4.9,10.6 L14,1.2" fill="none" stroke="#22ee22" stroke-width="1" opacity="0.8"/></svg>
<svg class="abs" style="left:0;top:0" width="1280" height="769">
<path d="M991 38h3v1h-3zM1004 38h2v1h-2zM1011 38h2v1h-2zM1015 38h2v1h-2zM1018 38h2v1h-2zM1029 38h4v1h-4zM984 39h8v1h-8zM997 39h6v1h-6zM1004 39h2v1h-2zM1011 39h10v1h-10zM1029 39h2v1h-2zM1032 39h2v1h-2zM988 40h2v1h-2zM1004 40h2v1h-2zM1011 40h2v1h-2zM1015 40h2v1h-2zM1018 40h2v1h-2zM1023 40h11v1h-11zM988 41h2v1h-2zM1002 41h6v1h-6zM1010 41h11v1h-11zM1029 41h2v1h-2zM984 42h11v1h-11zM997 42h6v1h-6zM1004 42h4v1h-4zM1011 42h2v1h-2zM1014 42h2v1h-2zM1019 42h2v1h-2zM1029 42h2v1h-2zM988 43h2v1h-2zM998 43h2v1h-2zM1004 43h4v1h-4zM1011 43h10v1h-10zM1023 43h8v1h-8zM988 44h2v1h-2zM998 44h4v1h-4zM1003 44h2v1h-2zM1006 44h2v1h-2zM1010 44h11v1h-11zM1025 44h2v1h-2zM1029 44h2v1h-2zM984 45h11v1h-11zM998 45h4v1h-4zM1003 45h2v1h-2zM1006 45h2v1h-2zM1010 45h3v1h-3zM1016 45h2v1h-2zM1025 45h2v1h-2zM1029 45h2v1h-2zM988 46h2v1h-2zM997 46h2v1h-2zM1001 46h4v1h-4zM1006 46h2v1h-2zM1009 46h12v1h-12zM1025 46h2v1h-2zM1030 46h2v1h-2zM988 47h2v1h-2zM997 47h8v1h-8zM1006 47h2v1h-2zM1011 47h2v1h-2zM1016 47h3v1h-3zM1025 47h7v1h-7zM1033 47h2v1h-2zM988 48h2v1h-2zM1002 48h2v1h-2zM1006 48h2v1h-2zM1011 48h2v1h-2zM1014 48h3v1h-3zM1018 48h2v1h-2zM1023 48h5v1h-5zM1030 48h4v1h-4zM986 49h4v1h-4zM1002 49h5v1h-5zM1011 49h5v1h-5zM1019 49h2v1h-2zM1031 49h3v1h-3zM989 66h2v1h-2zM1005 66h2v1h-2zM1012 66h2v1h-2zM1016 66h2v1h-2zM1019 66h2v1h-2zM1030 66h4v1h-4zM989 67h2v1h-2zM998 67h6v1h-6zM1005 67h2v1h-2zM1012 67h10v1h-10zM1030 67h2v1h-2zM1033 67h2v1h-2zM986 68h9v1h-9zM1005 68h2v1h-2zM1012 68h2v1h-2zM1016 68h2v1h-2zM1019 68h2v1h-2zM1024 68h11v1h-11zM986 69h2v1h-2zM993 69h2v1h-2zM1003 69h6v1h-6zM1011 69h11v1h-11zM1030 69h2v1h-2zM986 70h2v1h-2zM993 70h2v1h-2zM998 70h6v1h-6zM1005 70h4v1h-4zM1012 70h2v1h-2zM1015 70h2v1h-2zM1020 70h2v1h-2zM1030 70h2v1h-2zM986 71h9v1h-9zM999 71h2v1h-2zM1005 71h4v1h-4zM1012 71h10v1h-10zM1024 71h8v1h-8zM986 72h2v1h-2zM993 72h2v1h-2zM999 72h4v1h-4zM1004 72h2v1h-2zM1007 72h2v1h-2zM1011 72h11v1h-11zM1026 72h2v1h-2zM1030 72h2v1h-2zM986 73h9v1h-9zM999 73h4v1h-4zM1004 73h2v1h-2zM1007 73h2v1h-2zM1011 73h3v1h-3zM1017 73h2v1h-2zM1026 73h2v1h-2zM1030 73h2v1h-2zM986 74h2v1h-2zM993 74h2v1h-2zM998 74h2v1h-2zM1002 74h4v1h-4zM1007 74h2v1h-2zM1010 74h12v1h-12zM1026 74h2v1h-2zM1031 74h2v1h-2zM986 75h2v1h-2zM993 75h2v1h-2zM998 75h8v1h-8zM1007 75h2v1h-2zM1012 75h2v1h-2zM1017 75h3v1h-3zM1026 75h7v1h-7zM1034 75h2v1h-2zM986 76h9v1h-9zM1003 76h2v1h-2zM1007 76h2v1h-2zM1012 76h2v1h-2zM1015 76h3v1h-3zM1019 76h2v1h-2zM1024 76h5v1h-5zM1031 76h4v1h-4zM986 77h2v1h-2zM993 77h2v1h-2zM1003 77h5v1h-5zM1012 77h5v1h-5zM1020 77h2v1h-2zM1032 77h3v1h-3zM988 345h4v1h-4zM997 345h8v1h-8zM986 346h3v1h-3zM991 346h2v1h-2zM997 346h5v1h-5zM1003 346h2v1h-2zM1010 346h3v1h-3zM1015 346h5v1h-5zM1023 346h11v1h-11zM985 347h9v1h-9zM997 347h11v1h-11zM1011 347h3v1h-3zM1015 347h2v1h-2zM1018 347h2v1h-2zM1023 347h2v1h-2zM1026 347h2v1h-2zM1029 347h2v1h-2zM1032 347h2v1h-2zM988 348h2v1h-2zM998 348h4v1h-4zM1003 348h4v1h-4zM1015 348h2v1h-2zM1018 348h2v1h-2zM1023 348h11v1h-11zM984 349h11v1h-11zM998 349h9v1h-9zM1014 349h2v1h-2zM1018 349h2v1h-2zM1027 349h2v1h-2zM986 350h2v1h-2zM991 350h2v1h-2zM997 350h4v1h-4zM1002 350h5v1h-5zM1010 350h6v1h-6zM1018 350h3v1h-3zM1023 350h11v1h-11zM985 351h9v1h-9zM999 351h2v1h-2zM1002 351h5v1h-5zM1011 351h2v1h-2zM1024 351h9v1h-9zM984 352h5v1h-5zM990 352h2v1h-2zM993 352h3v1h-3zM997 352h6v1h-6zM1004 352h3v1h-3zM1011 352h2v1h-2zM1014 352h7v1h-7zM1024 352h2v1h-2zM1031 352h2v1h-2zM988 353h3v1h-3zM998 353h4v1h-4zM1004 353h2v1h-2zM1011 353h2v1h-2zM1014 353h2v1h-2zM1018 353h2v1h-2zM1024 353h9v1h-9zM986 354h3v1h-3zM991 354h2v1h-2zM998 354h4v1h-4zM1004 354h3v1h-3zM1011 354h2v1h-2zM1015 354h2v1h-2zM1018 354h2v1h-2zM1024 354h9v1h-9zM989 355h3v1h-3zM998 355h4v1h-4zM1003 355h2v1h-2zM1006 355h2v1h-2zM1011 355h4v1h-4zM1016 355h3v1h-3zM1024 355h9v1h-9zM985 356h5v1h-5zM997 356h2v1h-2zM1002 356h2v1h-2zM1006 356h2v1h-2zM1011 356h3v1h-3zM1015 356h5v1h-5zM1024 356h2v1h-2zM1031 356h2v1h-2zM1013 357h3v1h-3zM1018 357h3v1h-3zM1023 357h11v1h-11z" fill="#21449a"/>
<path d="M994 102h1v1h-1zM999 102h1v1h-1zM994 103h1v1h-1zM997 103h6v1h-6zM1006 103h1v1h-1zM1012 103h1v1h-1zM1019 103h1v1h-1zM1024 103h1v1h-1zM1031 103h1v1h-1zM1035 103h1v1h-1zM994 104h1v1h-1zM1001 104h1v1h-1zM1006 104h3v1h-3zM1012 104h1v1h-1zM1017 104h10v1h-10zM1030 104h1v1h-1zM1035 104h1v1h-1zM1037 104h2v1h-2zM992 105h4v1h-4zM998 105h1v1h-1zM1001 105h1v1h-1zM1005 105h1v1h-1zM1008 105h1v1h-1zM1010 105h5v1h-5zM1019 105h1v1h-1zM1024 105h1v1h-1zM1030 105h1v1h-1zM1035 105h1v1h-1zM1037 105h2v1h-2zM994 106h1v1h-1zM996 106h7v1h-7zM1005 106h6v1h-6zM1012 106h1v1h-1zM1014 106h1v1h-1zM1019 106h6v1h-6zM1029 106h1v1h-1zM1032 106h5v1h-5zM994 107h1v1h-1zM999 107h1v1h-1zM1005 107h1v1h-1zM1007 107h1v1h-1zM1009 107h2v1h-2zM1012 107h1v1h-1zM1014 107h1v1h-1zM1019 107h6v1h-6zM1029 107h3v1h-3zM1035 107h1v1h-1zM994 108h2v1h-2zM998 108h1v1h-1zM1005 108h6v1h-6zM1012 108h1v1h-1zM1014 108h1v1h-1zM1019 108h1v1h-1zM1024 108h1v1h-1zM1030 108h1v1h-1zM1035 108h4v1h-4zM992 109h3v1h-3zM996 109h8v1h-8zM1005 109h1v1h-1zM1007 109h1v1h-1zM1009 109h6v1h-6zM1017 109h10v1h-10zM1030 109h1v1h-1zM1033 109h3v1h-3zM994 110h1v1h-1zM997 110h1v1h-1zM1001 110h1v1h-1zM1005 110h1v1h-1zM1007 110h1v1h-1zM1009 110h1v1h-1zM1012 110h1v1h-1zM1019 110h1v1h-1zM1024 110h1v1h-1zM1029 110h4v1h-4zM1035 110h1v1h-1zM1038 110h1v1h-1zM994 111h1v1h-1zM997 111h4v1h-4zM1005 111h5v1h-5zM1012 111h1v1h-1zM1014 111h1v1h-1zM1018 111h1v1h-1zM1021 111h1v1h-1zM1025 111h1v1h-1zM1036 111h2v1h-2zM994 112h1v1h-1zM999 112h3v1h-3zM1005 112h1v1h-1zM1007 112h1v1h-1zM1009 112h1v1h-1zM1012 112h1v1h-1zM1014 112h1v1h-1zM1017 112h1v1h-1zM1019 112h6v1h-6zM1026 112h2v1h-2zM1031 112h2v1h-2zM1036 112h1v1h-1zM993 113h2v1h-2zM996 113h3v1h-3zM1002 113h1v1h-1zM1005 113h1v1h-1zM1007 113h1v1h-1zM1009 113h6v1h-6zM1021 113h1v1h-1zM1029 113h2v1h-2zM1034 113h5v1h-5zM1004 114h1v1h-1zM1007 114h2v1h-2zM1015 114h1v1h-1zM1017 114h10v1h-10zM1033 114h1v1h-1zM1037 114h2v1h-2zM994 180h1v1h-1zM996 180h7v1h-7zM1007 180h1v1h-1zM1011 180h1v1h-1zM995 181h1v1h-1zM1002 181h1v1h-1zM1006 181h1v1h-1zM1008 181h7v1h-7zM995 182h1v1h-1zM998 182h2v1h-2zM1002 182h1v1h-1zM1006 182h1v1h-1zM1011 182h1v1h-1zM993 183h1v1h-1zM998 183h1v1h-1zM1000 183h1v1h-1zM1002 183h1v1h-1zM1006 183h1v1h-1zM1009 183h5v1h-5zM993 184h1v1h-1zM995 184h6v1h-6zM1002 184h1v1h-1zM1005 184h2v1h-2zM1008 184h1v1h-1zM1013 184h1v1h-1zM993 185h1v1h-1zM995 185h4v1h-4zM1000 185h1v1h-1zM1002 185h1v1h-1zM1004 185h1v1h-1zM1006 185h1v1h-1zM1009 185h5v1h-5zM993 186h1v1h-1zM995 186h1v1h-1zM997 186h2v1h-2zM1000 186h1v1h-1zM1002 186h1v1h-1zM1006 186h1v1h-1zM1008 186h1v1h-1zM1013 186h1v1h-1zM993 187h1v1h-1zM995 187h5v1h-5zM1002 187h1v1h-1zM1006 187h1v1h-1zM1009 187h5v1h-5zM993 188h1v1h-1zM999 188h1v1h-1zM1002 188h1v1h-1zM1006 188h1v1h-1zM1008 188h1v1h-1zM1013 188h1v1h-1zM993 189h1v1h-1zM995 189h5v1h-5zM1001 189h2v1h-2zM1006 189h1v1h-1zM1009 189h5v1h-5zM993 190h1v1h-1zM997 190h1v1h-1zM1000 190h1v1h-1zM1002 190h1v1h-1zM1006 190h1v1h-1zM1008 190h1v1h-1zM1013 190h1v1h-1zM993 191h1v1h-1zM1000 191h3v1h-3zM1006 191h9v1h-9zM1195 103h2v1h-2zM1200 103h4v1h-4zM1207 103h10v1h-10zM1196 104h2v1h-2zM1200 104h1v1h-1zM1203 104h1v1h-1zM1207 104h1v1h-1zM1210 104h1v1h-1zM1213 104h1v1h-1zM1216 104h1v1h-1zM1200 105h1v1h-1zM1203 105h1v1h-1zM1207 105h10v1h-10zM1199 106h1v1h-1zM1203 106h1v1h-1zM1211 106h1v1h-1zM1195 107h2v1h-2zM1198 107h2v1h-2zM1203 107h2v1h-2zM1207 107h10v1h-10zM1196 108h1v1h-1zM1208 108h8v1h-8zM1196 109h1v1h-1zM1199 109h6v1h-6zM1208 109h1v1h-1zM1215 109h1v1h-1zM1196 110h1v1h-1zM1199 110h1v1h-1zM1203 110h1v1h-1zM1208 110h8v1h-8zM1196 111h1v1h-1zM1200 111h1v1h-1zM1203 111h1v1h-1zM1208 111h8v1h-8zM1196 112h3v1h-3zM1201 112h2v1h-2zM1208 112h8v1h-8zM1196 113h2v1h-2zM1200 113h4v1h-4zM1208 113h1v1h-1zM1215 113h1v1h-1zM1198 114h2v1h-2zM1203 114h2v1h-2zM1207 114h10v1h-10zM1195 180h2v1h-2zM1200 180h4v1h-4zM1207 180h10v1h-10zM1196 181h2v1h-2zM1200 181h1v1h-1zM1203 181h1v1h-1zM1207 181h1v1h-1zM1210 181h1v1h-1zM1213 181h1v1h-1zM1216 181h1v1h-1zM1200 182h1v1h-1zM1203 182h1v1h-1zM1207 182h10v1h-10zM1199 183h1v1h-1zM1203 183h1v1h-1zM1211 183h1v1h-1zM1195 184h2v1h-2zM1198 184h2v1h-2zM1203 184h2v1h-2zM1207 184h10v1h-10zM1196 185h1v1h-1zM1208 185h8v1h-8zM1196 186h1v1h-1zM1199 186h6v1h-6zM1208 186h1v1h-1zM1215 186h1v1h-1zM1196 187h1v1h-1zM1199 187h1v1h-1zM1203 187h1v1h-1zM1208 187h8v1h-8zM1196 188h1v1h-1zM1200 188h1v1h-1zM1203 188h1v1h-1zM1208 188h8v1h-8zM1196 189h3v1h-3zM1201 189h2v1h-2zM1208 189h8v1h-8zM1196 190h2v1h-2zM1200 190h4v1h-4zM1208 190h1v1h-1zM1215 190h1v1h-1zM1198 191h2v1h-2zM1203 191h2v1h-2zM1207 191h10v1h-10zM1133 285h1v1h-1zM1138 285h1v1h-1zM1100 286h1v1h-1zM1115 286h1v1h-1zM1121 286h1v1h-1zM1126 286h1v1h-1zM1132 286h10v1h-10zM1100 287h1v1h-1zM1108 287h5v1h-5zM1115 287h1v1h-1zM1121 287h2v1h-2zM1126 287h1v1h-1zM1132 287h1v1h-1zM1134 287h1v1h-1zM1136 287h1v1h-1zM1139 287h1v1h-1zM1097 288h8v1h-8zM1115 288h1v1h-1zM1122 288h1v1h-1zM1126 288h1v1h-1zM1133 288h8v1h-8zM1097 289h1v1h-1zM1104 289h1v1h-1zM1113 289h5v1h-5zM1126 289h1v1h-1zM1133 289h8v1h-8zM1097 290h1v1h-1zM1104 290h1v1h-1zM1108 290h5v1h-5zM1115 290h1v1h-1zM1117 290h1v1h-1zM1120 290h2v1h-2zM1123 290h8v1h-8zM1133 290h1v1h-1zM1140 290h1v1h-1zM1097 291h8v1h-8zM1109 291h1v1h-1zM1115 291h1v1h-1zM1117 291h1v1h-1zM1121 291h1v1h-1zM1126 291h1v1h-1zM1133 291h8v1h-8zM1097 292h1v1h-1zM1104 292h1v1h-1zM1109 292h1v1h-1zM1111 292h1v1h-1zM1114 292h1v1h-1zM1117 292h1v1h-1zM1121 292h1v1h-1zM1126 292h1v1h-1zM1133 292h8v1h-8zM1097 293h8v1h-8zM1109 293h1v1h-1zM1111 293h1v1h-1zM1114 293h1v1h-1zM1117 293h1v1h-1zM1121 293h1v1h-1zM1126 293h1v1h-1zM1135 293h1v1h-1zM1139 293h1v1h-1zM1097 294h1v1h-1zM1104 294h1v1h-1zM1108 294h1v1h-1zM1112 294h1v1h-1zM1114 294h1v1h-1zM1117 294h1v1h-1zM1121 294h1v1h-1zM1126 294h1v1h-1zM1132 294h10v1h-10zM1097 295h1v1h-1zM1104 295h1v1h-1zM1108 295h5v1h-5zM1114 295h1v1h-1zM1117 295h1v1h-1zM1121 295h1v1h-1zM1123 295h1v1h-1zM1126 295h1v1h-1zM1134 295h1v1h-1zM1139 295h1v1h-1zM1097 296h8v1h-8zM1113 296h1v1h-1zM1117 296h1v1h-1zM1121 296h2v1h-2zM1126 296h1v1h-1zM1132 296h2v1h-2zM1139 296h1v1h-1zM1097 297h1v1h-1zM1104 297h1v1h-1zM1113 297h1v1h-1zM1115 297h2v1h-2zM1121 297h1v1h-1zM1126 297h1v1h-1z" fill="#000"/>
</svg>
<div id="status" class="abs"></div>
<div class="abs st" style="left:5px;letter-spacing:0">CA= 104.99  °</div>
<div class="abs sep" style="left:279px"></div>
<div class="abs st" style="left:286px">ST= 27.9809  mN/m</div>
<div class="abs sep" style="left:526px"></div>
<div class="abs st" style="left:532px">Used Time:875 ms</div>
<div class="abs sep" style="left:711px"></div>
</body></html>
